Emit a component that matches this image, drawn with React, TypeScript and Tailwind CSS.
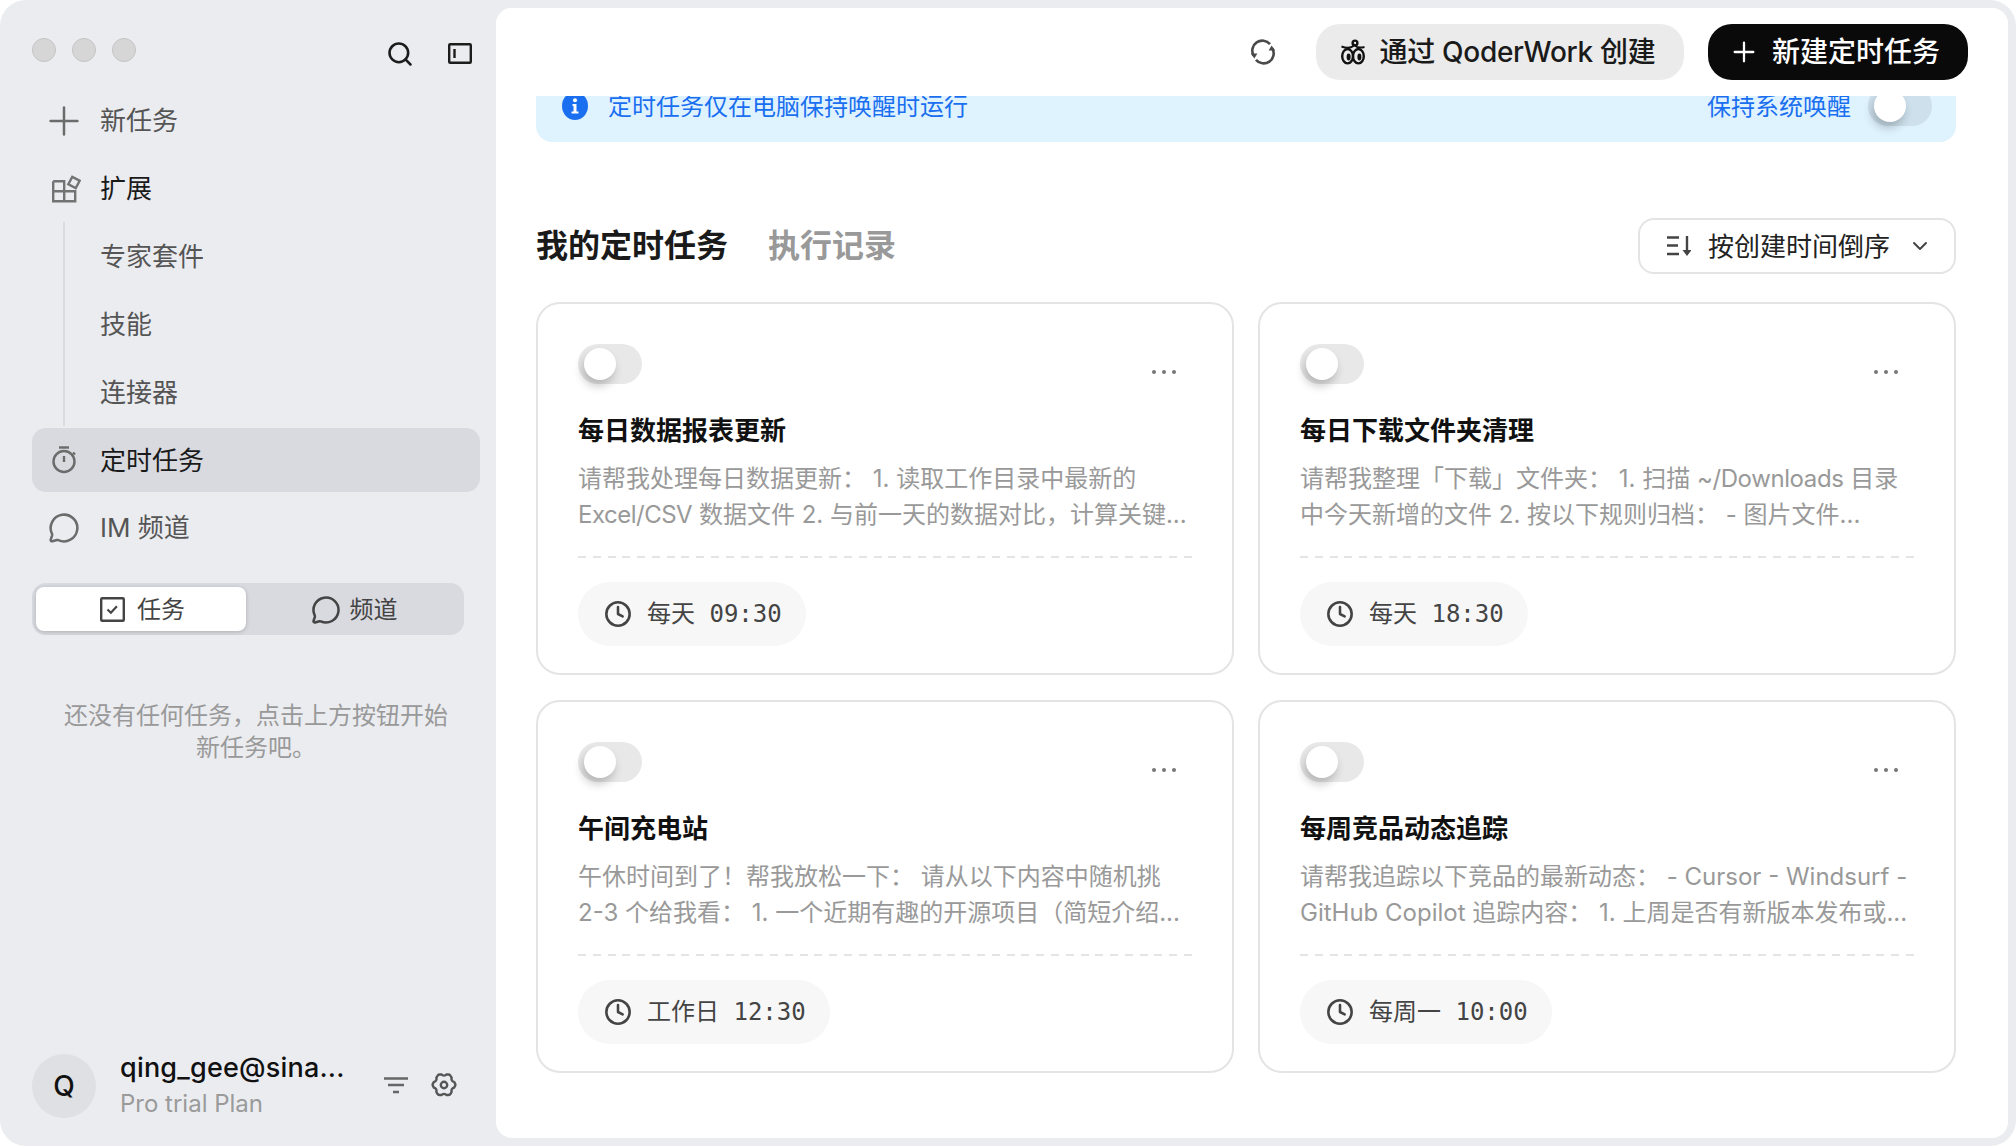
import React from "react";
import { Plus, Search, MessageCircle, Clock, ChevronDown } from "lucide-react";

const font = "font-['Inter','Noto_Sans_CJK_SC',sans-serif]";

function Toggle({ track }: { track: string }) {
  return (
    <div className={`flex h-[40px] w-[64px] shrink-0 items-center rounded-full pl-[6px] ${track}`}>
      <div className="h-[32px] w-[32px] rounded-full bg-white shadow-[-2px_6px_10px_rgba(0,0,0,0.22)]" />
    </div>
  );
}

function ExtIcon() {
  return (
    <svg className="ml-[3px]" width="30" height="28" viewBox="0 0 30 28" fill="none" stroke="#737373" strokeWidth="2.4">
      <path d="M2.2 6.2h11v20M2.2 6.2v20h22v-10H2.2" />
      <rect x="-4.2" y="-4.2" width="8.4" height="8.4" transform="translate(23 7.5) rotate(28)" />
    </svg>
  );
}

function TimerIcon() {
  return (
    <svg width="26" height="28" viewBox="0 0 26 28" fill="none" stroke="#6b6b6b" strokeWidth="2.4">
      <path d="M8 1.5h10" />
      <circle cx="13" cy="15.5" r="10.5" />
      <path d="M13 10v6M22 6.5l2 2" />
    </svg>
  );
}

function CheckSquare() {
  return (
    <svg width="25" height="25" viewBox="0 0 25 25" fill="none" stroke="#444">
      <rect x="1.2" y="1.2" width="22.6" height="22.6" strokeWidth="2.4" rx="1" />
      <path d="M7.5 12.5l3.4 3.2 6-6.4" strokeWidth="2.2" />
    </svg>
  );
}

function PanelIcon() {
  return (
    <svg width="24" height="21" viewBox="0 0 24 21" fill="none" stroke="#1c1c1c" strokeWidth="2.4">
      <rect x="1.2" y="1.2" width="21.6" height="18.6" rx="1" />
      <path d="M6.5 6v9" />
    </svg>
  );
}

function FilterIcon() {
  return (
    <svg width="24" height="17" viewBox="0 0 24 17" fill="none" stroke="#666" strokeWidth="2.6">
      <path d="M0 1.5h24M4 8h16M9 15h6" />
    </svg>
  );
}

function GearIcon() {
  return (
    <svg width="28" height="26" viewBox="0 0 28 26" fill="none" stroke="#555" strokeWidth="2.4" strokeLinejoin="round">
      <path d="M9.5 2.5h2.2c.8 1.5 3.8 1.5 4.6 0h2.2c1 0 1.6.4 2 1.2l1.2 2.2c-.9 1.5.6 4 2.4 4l1.1 2c.3.6.3 1.2 0 1.8l-1.1 2c-1.8 0-3.3 2.5-2.4 4l-1.2 2.2c-.4.8-1 1.1-2 1.1h-2.2c-.8-1.5-3.8-1.5-4.6 0H9.5c-1 0-1.6-.3-2-1.1l-1.2-2.2c.9-1.5-.6-4-2.4-4l-1.1-2c-.3-.6-.3-1.2 0-1.8l1.1-2c1.8 0 3.3-2.5 2.4-4l1.2-2.2c.4-.8 1-1.2 2-1.2z" />
      <circle cx="14" cy="13" r="3.2" />
    </svg>
  );
}

function RefreshIcon() {
  return (
    <svg width="26" height="26" viewBox="0 0 26 26" fill="none" stroke="#4a4a4a" strokeWidth="2.6">
      <path d="M20 5.2A10 10 0 0 0 3.6 16.5" />
      <path d="M6 20.8A10 10 0 0 0 22.4 9.5" />
      <path d="M0.8 14.5l3.6 5 3-5z" fill="#4a4a4a" stroke="none" />
      <path d="M25.2 11.5l-3.6-5-3 5z" fill="#4a4a4a" stroke="none" />
    </svg>
  );
}

function BeeIcon() {
  return (
    <svg width="26" height="26" viewBox="0 0 26 26" fill="none" stroke="#111" strokeWidth="2.4">
      <ellipse cx="7.6" cy="17.2" rx="5.4" ry="7.2" />
      <ellipse cx="18.4" cy="17.2" rx="5.4" ry="7.2" />
      <ellipse cx="8.6" cy="18" rx="2" ry="3.4" fill="#111" stroke="none" />
      <ellipse cx="19.4" cy="18" rx="2" ry="3.4" fill="#111" stroke="none" />
      <circle cx="15" cy="4" r="2.4" />
      <path d="M1.5 7.5c5 2 10 1.5 13-1.5 2 2.5 6 3 10 2" strokeWidth="2" />
    </svg>
  );
}

function SortIcon() {
  return (
    <svg width="24" height="22" viewBox="0 0 24 22" fill="none" stroke="#444" strokeWidth="2.4">
      <path d="M0 2.5h12M0 10.5h11M0 19h12M20 1v16" />
      <path d="M15.5 15h9L20 21z" fill="#444" stroke="none" />
    </svg>
  );
}

function InfoIcon() {
  return (
    <svg width="26" height="28" viewBox="0 0 26 28">
      <ellipse cx="13" cy="14" rx="13" ry="14" fill="#1a6ff0" />
      <circle cx="13" cy="8.2" r="2" fill="#fff" />
      <path d="M10.5 12h4v7.5h2v2h-7v-2h2v-5.5h-1z" fill="#fff" />
    </svg>
  );
}

const Row = ({ icon, label, cls }: { icon?: React.ReactNode; label: string; cls: string }) => (
  <div className="flex h-[68px] items-center">
    <div className="flex w-[68px] shrink-0 justify-center pr-[4px]">{icon}</div>
    <span className={`text-[26px] leading-[36px] ${cls}`}>{label}</span>
  </div>
);

const tasks: { title: string; l1: React.ReactNode; l2: React.ReactNode; time: string }[] = [
  {
    title: "每日数据报表更新",
    l1: "请帮我处理每日数据更新： 1. 读取工作目录中最新的",
    l2: (
      <>
        <span className="tracking-[-0.5px]">Excel/CSV</span> 数据文件 2. 与前一天的数据对比，计算关键...
      </>
    ),
    time: "每天 09:30",
  },
  {
    title: "每日下载文件夹清理",
    l1: (
      <>
        请帮我整理「下载」文件夹： 1. 扫描 <span className="tracking-[-0.4px]">~/Downloads</span> 目录
      </>
    ),
    l2: "中今天新增的文件 2. 按以下规则归档： - 图片文件...",
    time: "每天 18:30",
  },
  {
    title: "午间充电站",
    l1: "午休时间到了！帮我放松一下： 请从以下内容中随机挑",
    l2: "2-3 个给我看： 1. 一个近期有趣的开源项目（简短介绍...",
    time: "工作日 12:30",
  },
  {
    title: "每周竞品动态追踪",
    l1: "请帮我追踪以下竞品的最新动态： - Cursor - Windsurf -",
    l2: "GitHub Copilot 追踪内容： 1. 上周是否有新版本发布或...",
    time: "每周一 10:00",
  },
];

function Card({ t }: { t: (typeof tasks)[number] }) {
  return (
    <div className="h-[373px] rounded-[24px] border-2 border-[#e4e4e4] bg-white px-[40px] pt-[40px]">
      <div className="flex h-[40px] items-center justify-between">
        <Toggle track="bg-[#e8e8e8]" />
        <div className="mr-[16px] mt-[16px] flex gap-[6px]">
          <span className="h-[4px] w-[4px] rounded-full bg-[#777]" />
          <span className="h-[4px] w-[4px] rounded-full bg-[#777]" />
          <span className="h-[4px] w-[4px] rounded-full bg-[#777]" />
        </div>
      </div>
      <div className="mt-[29px] text-[26px] font-semibold leading-[36px] text-[#111]">{t.title}</div>
      <div className="mt-[12px] text-[24px] leading-[36px] text-[#999]">
        <div className="whitespace-nowrap">{t.l1}</div>
        <div className="whitespace-nowrap">{t.l2}</div>
      </div>
      <div className="mt-[23px] h-[2px] bg-[repeating-linear-gradient(90deg,#e4e4e4_0_8px,transparent_8px_14.78px)]" />
      <div className="mt-[24px] flex">
        <div className="flex h-[64px] items-center gap-[15px] rounded-full bg-[#f7f7f7] pl-[26px] pr-[24px]">
          <Clock size={28} color="#444" strokeWidth={2.2} />
          <span className="font-['DejaVu_Sans_Mono','Noto_Sans_CJK_SC',monospace] text-[24px] text-[#444]">{t.time}</span>
        </div>
      </div>
    </div>
  );
}

export default function App() {
  return (
    <div className={`h-screen w-screen overflow-hidden bg-white ${font}`}>
      <div className="flex h-full w-full overflow-hidden rounded-[26px] bg-[#ebecf0]">
        {/* Sidebar */}
        <aside className="flex w-[496px] shrink-0 flex-col pl-[32px] pr-[16px]">
          <div className="flex h-[87px] shrink-0 items-center pt-[12px]">
            <div className="flex gap-[16px]">
              <span className="h-[24px] w-[24px] rounded-full border border-[#c4c4c4] bg-[#d6d6d6]" />
              <span className="h-[24px] w-[24px] rounded-full border border-[#c4c4c4] bg-[#d6d6d6]" />
              <span className="h-[24px] w-[24px] rounded-full border border-[#c4c4c4] bg-[#d6d6d6]" />
            </div>
            <div className="ml-auto flex items-center gap-[34px] pr-[8px] pt-[8px]">
              <Search size={28} color="#1c1c1c" strokeWidth={2.2} />
              <PanelIcon />
            </div>
          </div>
          <Row icon={<Plus size={46} color="#6b6b6b" strokeWidth={1.3} />} label="新任务" cls="text-[#555]" />
          <Row icon={<ExtIcon />} label="扩展" cls="text-[#1a1a1a]" />
          <div className="-mt-[1px] ml-[31px] border-l-2 border-[#dcdcdf]">
            <div className="flex h-[68px] items-center pl-[35px] text-[26px] text-[#555]">专家套件</div>
            <div className="flex h-[68px] items-center pl-[35px] text-[26px] text-[#555]">技能</div>
            <div className="flex h-[68px] items-center pl-[35px] text-[26px] text-[#555]">连接器</div>
          </div>
          <div className="mt-[2px] flex h-[64px] items-center rounded-[14px] bg-[#d9dadf]">
            <div className="flex w-[68px] shrink-0 justify-center pr-[4px]"><TimerIcon /></div>
            <span className="text-[26px] text-[#1a1a1a]">定时任务</span>
          </div>
          <div className="mt-[2px]">
            <Row icon={<MessageCircle size={32} color="#6b6b6b" strokeWidth={1.9} />} label="IM 频道" cls="text-[#555]" />
          </div>
          <div className="mr-[16px] mt-[21px] flex h-[52px] shrink-0 rounded-[14px] bg-[#d9dadf] p-[4px]">
            <div className="flex h-[44px] w-[210px] items-center justify-center gap-[12px] rounded-[8px] bg-white pl-[3px] pt-[1px] shadow-[0_1px_4px_rgba(0,0,0,0.2)]">
              <CheckSquare />
              <span className="text-[24px] text-[#444]">任务</span>
            </div>
            <div className="flex flex-1 items-center justify-center gap-[9px] pl-[2px] pt-[1px]">
              <MessageCircle size={30} color="#444" strokeWidth={2} />
              <span className="text-[24px] text-[#444]">频道</span>
            </div>
          </div>
          <div className="mt-[65px] px-[28px] text-center text-[24px] leading-[32px] text-[#999]">
            还没有任何任务，点击上方按钮开始新任务吧。
          </div>
          <div className="mt-auto flex items-center pb-[24px] pr-[22px]">
            <div className="flex h-[64px] w-[64px] shrink-0 items-center justify-center rounded-full bg-[#dfe0e3] text-[28px] font-medium text-[#111]">Q</div>
            <div className="ml-[24px] min-w-0 flex-1">
              <div className="text-[27px] font-medium leading-[36px] tracking-[0.2px] text-[#111]">qing_gee@sina...</div>
              <div className="text-[24px] leading-[36px] text-[#9a9a9a]">Pro trial Plan</div>
            </div>
            <div className="flex items-center gap-[22px] pb-[2px]">
              <FilterIcon />
              <GearIcon />
            </div>
          </div>
        </aside>

        {/* Main */}
        <main className="my-[8px] mr-[8px] flex min-w-0 flex-1 flex-col overflow-hidden rounded-[16px] bg-white">
          <header className="relative z-10 flex h-[88px] shrink-0 items-center justify-end bg-white pr-[40px]">
            <RefreshIcon />
            <div className="ml-[40px] flex h-[56px] w-[368px] items-center justify-center gap-[14px] rounded-[24px] bg-[#ebebeb] pr-[5px] text-[28px] font-medium tracking-[-0.3px] text-[#1a1a1a]">
              <BeeIcon />
              <span>通过 QoderWork 创建</span>
            </div>
            <div className="ml-[24px] flex h-[56px] w-[260px] items-center gap-[12px] rounded-[24px] bg-[#0a0a0a] pl-[20px] text-[28px] font-medium text-white">
              <Plus size={32} color="#fff" strokeWidth={1.7} />
              <span>新建定时任务</span>
            </div>
          </header>

          <div className="min-h-0 flex-1 overflow-hidden pl-[40px] pr-[52px]">
            <div className="-mt-[26px] flex h-[72px] items-center rounded-[16px] bg-[#dff3ff] pl-[26px] pr-[24px] text-[24px] leading-[22px] text-[#1a6ff0]">
              <InfoIcon />
              <span className="ml-[20px] mt-[1px]">定时任务仅在电脑保持唤醒时运行</span>
              <span className="ml-auto mr-[17px] mt-[1px]">保持系统唤醒</span>
              <Toggle track="bg-[#cde0ec]" />
            </div>

            <div className="mt-[76px] flex h-[56px] items-center">
              <span className="text-[32px] font-semibold text-[#1a1a1a]">我的定时任务</span>
              <span className="ml-[40px] text-[32px] font-semibold text-[#999]">执行记录</span>
              <div className="ml-auto flex h-[56px] w-[318px] items-center rounded-[16px] border-2 border-[#e4e4e4] pl-[27px] text-[26px] text-[#222]">
                <SortIcon />
                <span className="ml-[17px]">按创建时间倒序</span>
                <ChevronDown size={24} color="#444" strokeWidth={2} className="ml-[18px]" />
              </div>
            </div>

            <div className="mt-[28px] grid grid-cols-2 gap-x-[24px] gap-y-[25px]">
              {tasks.map((t) => (
                <Card key={t.title} t={t} />
              ))}
            </div>
          </div>
        </main>
      </div>
    </div>
  );
}
